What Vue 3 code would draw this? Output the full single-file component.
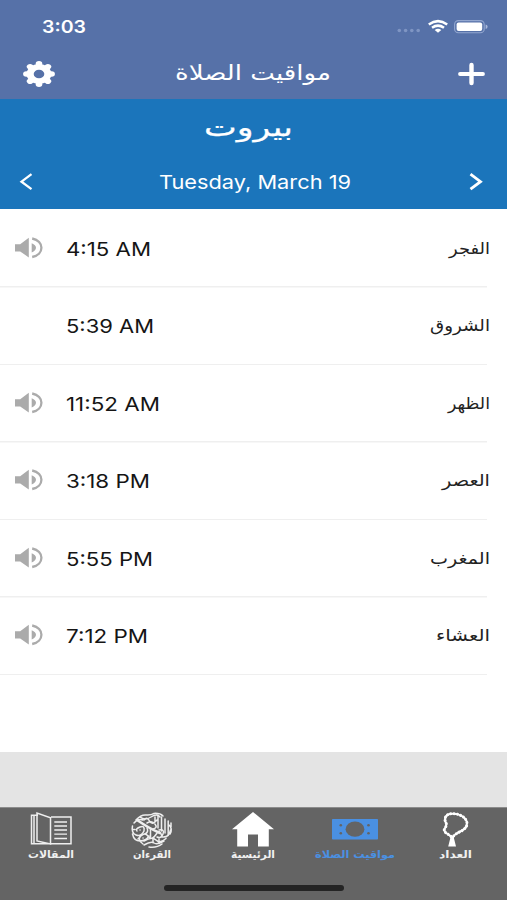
<script setup>
import { h } from 'vue'

// A single line of text fitted to an exact width.
const FitText = (props) =>
  h('svg', { width: props.w, height: 30, viewBox: `0 0 ${props.w} 30` }, [
    h('text', { x: 0, y: 22, textLength: props.w, lengthAdjust: 'spacingAndGlyphs' }, props.text),
  ])
FitText.props = ['w', 'text']

const prayers = [
  { time: '4:15 AM', tw: 85, name: 'الفجر', nw: 41, sound: true },
  { time: '5:39 AM', tw: 88, name: 'الشروق', nw: 60, sound: false },
  { time: '11:52 AM', tw: 94, name: 'الظهر', nw: 42, sound: true },
  { time: '3:18 PM', tw: 84, name: 'العصر', nw: 48, sound: true },
  { time: '5:55 PM', tw: 87, name: 'المغرب', nw: 60, sound: true },
  { time: '7:12 PM', tw: 82, name: 'العشاء', nw: 54, sound: true },
]

const tabs = [
  { id: 'articles', label: 'المقالات', w: 46 },
  { id: 'quran', label: 'القرءان', w: 38 },
  { id: 'home', label: 'الرئيسية', w: 44 },
  { id: 'times', label: 'مواقيت الصلاة', w: 80 },
  { id: 'counter', label: 'العداد', w: 33 },
]
const teeth = [0, 45, 90, 135, 180, 225, 270, 315]
</script>

<template>
  <div class="screen">
    <header class="top">
      <div class="status">
        <FitText class="clock" :w="44" text="3:03" />
        <div class="signals">
          <svg width="24" height="6" viewBox="0 0 24 6" fill="#7f95c3">
            <circle cx="2.3" cy="2.5" r="1.8" /><circle cx="8.6" cy="2.5" r="1.8" />
            <circle cx="14.8" cy="2.5" r="1.8" /><circle cx="21.2" cy="2.5" r="1.8" />
          </svg>
          <svg class="wifi" width="20" height="13" viewBox="0 0 20 13" fill="none" stroke="#fff" stroke-width="2.5">
            <path d="M.8 4.4Q10-2.2 19.2 4.4M4 7.8q6-4.3 12 0" />
            <path d="M6.7 10Q10 7.5 13.3 10L10 12.8Z" fill="#fff" stroke="none" />
          </svg>
          <svg width="34" height="14" viewBox="0 0 34 14">
            <rect x=".6" y=".6" width="29.6" height="12.2" rx="3.8" fill="none" stroke="#93a7d0" stroke-width="1.1" />
            <rect x="2.6" y="2.4" width="25.6" height="8.6" rx="2" fill="#fff" />
            <path d="M31.6 4.5q2 .6 2 2.3t-2 2.3z" fill="#a9b8da" />
          </svg>
        </div>
      </div>
      <div class="navbar">
        <svg width="32" height="26" viewBox="-16 -16 32 32" preserveAspectRatio="none">
          <circle r="12.4" fill="#fff" />
          <path v-for="a in teeth" :key="a" d="M0-9V-12.6" :transform="`rotate(${a})`" stroke="#fff" stroke-width="6.6" stroke-linecap="round" />
          <circle r="5.3" fill="#5671a8" />
        </svg>
        <FitText class="title" :w="156" text="مواقيت الصلاة" />
        <svg width="27" height="22" viewBox="0 0 27 22" stroke="#fff" stroke-linecap="round">
          <path d="M2 11H25" stroke-width="3.8" /><path d="M13.5 2V20" stroke-width="4.4" />
        </svg>
      </div>
    </header>

    <section class="place">
      <FitText class="city" :w="89" text="بيروت" />
      <div class="day">
        <svg width="14" height="18" viewBox="0 0 14 18" fill="none" stroke="#fff" stroke-width="2.3"><path d="M12.5 1.2 2.5 8.7 12.5 16.2" /></svg>
        <FitText class="date" :w="192" text="Tuesday, March 19" />
        <svg width="14" height="18" viewBox="0 0 14 18" fill="none" stroke="#fff" stroke-width="2.8"><path d="M1.5 1.2 11.5 8.7 1.5 16.2" /></svg>
      </div>
    </section>

    <main class="list">
      <div v-for="p in prayers" :key="p.time" class="row">
        <div class="speaker">
          <svg v-if="p.sound" width="29" height="22" viewBox="0 0 29 22" fill="#ababab">
            <path d="M0 7.3H5.2L13.8.8V20.4L5.2 14.4H0Z" />
            <path d="M16.7 6.2Q21 8 21 10.8T16.7 15.4Z" />
            <path d="M17.2 1.5C29.5 4 29.5 17.6 17.2 20" fill="none" stroke="#ababab" stroke-width="2.3" />
          </svg>
        </div>
        <FitText class="time" :w="p.tw" :text="p.time" />
        <FitText class="name" :w="p.nw" :text="p.name" />
      </div>
    </main>

    <div class="band"></div>

    <nav class="tabs">
      <div v-for="t in tabs" :key="t.id" class="tab" :class="{ active: t.id === 'times' }">
        <svg v-if="t.id === 'articles'" width="42" height="36" viewBox="0 0 42 36" fill="none" stroke="#eee" stroke-width="1.5">
          <path d="M8 3.2H1.5V31.8H41V5H21M4 3V31M7 1V29L20.5 32V5.8ZM20.5 5.8V32" />
          <path d="M24.3 10H37M24.3 14H37M24.3 18H37M24.3 22.2H37M24.3 26.5H37" stroke-width="1.3" />
        </svg>
        <svg v-else-if="t.id === 'quran'" width="42" height="36" viewBox="0 0 42 36" fill="none" stroke="#eee" stroke-width="1.5" stroke-linecap="round">
          <path d="M5 8Q10 2.5 15 3T23 1.4Q29 1 32 4M3 11Q7 6 12 8M9 5Q14 9 20 5T29 5" />
          <path d="M6 8Q12 12 17 15T29 21" stroke-width="2.6" />
          <path d="M1.5 14Q0 21 5 23T13 19Q14 13 9 15T6 19M1.5 22Q3 29 9 29T18 24M4 17.5H1.2M10 23Q6 28 12 32" />
          <path d="M13 8Q16 4 18.5 9T26 8M16 11Q21 8 24 12T22 17M27 3.5V16M30.5 5V19M34 7V21M37.2 9V23M24 5V10" />
          <path d="M7 27Q13 19 17 24T25 22.5T31 25Q38 26 39.5 18M13 29Q21 24 25 28T35 26.5M13 33Q20 29 23 31T33 29M18 35Q26 36 31 32" />
          <path d="M19.5 17V25M16 16Q18 20 14 22M28 18Q34 17 32 22T26 25M38 13Q42 17 39 22M9 18h.1M12 26h.1M22 27.5v3M28 27v4M40 11V15" />
        </svg>
        <svg v-else-if="t.id === 'home'" width="42" height="36" viewBox="0 0 42 36" fill="#fff">
          <path d="M21 0 42 17.3H36.8V34.5H26V22.5H16V34.5H5.2V17.3H0Z" />
        </svg>
        <svg v-else-if="t.id === 'times'" width="46" height="36" viewBox="0 0 46 36">
          <rect y="7" width="46" height="20.5" rx=".8" fill="#4a90e2" />
          <ellipse cx="23" cy="17.2" rx="9.4" ry="7.6" fill="#646464" />
          <g fill="#646464"><circle cx="8.8" cy="13.2" r="1.3" /><circle cx="8.8" cy="21.2" r="1.3" /><circle cx="36.5" cy="13.2" r="1.3" /><circle cx="36.5" cy="21.2" r="1.3" /></g>
        </svg>
        <svg v-else width="42" height="36" viewBox="0 0 42 36" fill="none" stroke="#fff">
          <path d="M16 24.5C13 21.5 8 20.5 9.5 17C11 14 12.5 13 10.5 10C9 6 11 1.8 17 1.7C25 1.2 31.5 6 32 11C32.4 17 26 19 22.5 21Q19 23 18 25" stroke-width="2" />
          <path d="M16 24.5C13 21.5 8 20.5 9.5 17C11 14 12.5 13 10.5 10C9 6 11 1.8 17 1.7C25 1.2 31.5 6 32 11C32.4 17 26 19 22.5 21Q19 23 18 25" stroke-width="3" stroke-linecap="round" stroke-dasharray=".1 3.2" />
          <path d="M15.2 24H19V26.5L21 34.5H13.2L15.2 26.5Z" fill="#fff" stroke="none" />
        </svg>
        <FitText class="label" :w="t.w" :text="t.label" />
      </div>
    </nav>
    <div class="bottom"><div class="indicator"></div></div>
  </div>
</template>

<style>
body { margin: 0; }
</style>

<style scoped>
.screen {
  width: 507px;
  height: 900px;
  overflow: hidden;
  display: flex;
  flex-direction: column;
  background: #fff;
  font-family: Inter, "DejaVu Sans", sans-serif;
}
svg { display: block; flex: none; overflow: visible; }
.top { height: 98.5px; background: #5671a8; flex: none; }
.status { height: 50px; display: flex; justify-content: space-between; padding: 0 19px 0 42px; }
.clock { margin-top: 10.5px; font-size: 17px; font-weight: 600; fill: #fff; }
.signals { display: flex; padding-top: 20px; height: 14px; }
.signals svg:first-child { margin: 7.5px 7px 0 0; }
.signals .wifi { margin-right: 6px; }
.navbar { height: 48px; display: flex; justify-content: space-between; align-items: center; padding: 0 22px 0 23px; }
.title { font-family: "DejaVu Sans", sans-serif; font-size: 21px; fill: #fff; margin: -2px 7px 0 0; }
.place { height: 110.5px; flex: none; background: #1b75bb; display: flex; flex-direction: column; align-items: center; }
.city { font-family: "DejaVu Sans", sans-serif; font-size: 26px; fill: #fff; stroke: #fff; stroke-width: .25px; margin: 15px 11px 0 0; }
.day { align-self: stretch; display: flex; justify-content: space-between; align-items: center; padding: 0 24px 0 19px; height: 30px; margin-top: 23px; }
.date { font-size: 18.8px; fill: #fff; margin-left: 7px; }
.list { height: 542.5px; flex: none; padding-top: 1px; box-sizing: border-box; }
.row { height: 77.5px; box-sizing: border-box; display: flex; align-items: center; padding: 0 17px 2px 15px; background: linear-gradient(#efefef, #efefef) left bottom / 487px 1.5px no-repeat; }
.speaker { width: 51px; }
.time { font-size: 18.7px; fill: #151515; margin-top: 2px; }
.name { font-family: "DejaVu Sans", sans-serif; font-size: 16px; fill: #222; margin: -2px 0 0 auto; }
.band { height: 55.5px; background: #e4e4e4; flex: none; }
.tabs { height: 65px; flex: none; background: #646464; border-top: 1px solid #8c8c8c; box-sizing: border-box; display: flex; padding-left: .5px; }
.tab { width: 101.2px; display: flex; flex-direction: column; align-items: center; padding-top: 4px; box-sizing: border-box; }
.label { font-family: "DejaVu Sans", sans-serif; font-weight: 700; font-size: 10.5px; fill: #f0f0f0; margin-top: -12px; }
.active .label { fill: #4a90e2; }
.bottom { flex: 1; background: #646464; display: flex; justify-content: center; }
.indicator { width: 180px; height: 5.5px; border-radius: 3px; background: #242424; margin-top: 13px; }
</style>
